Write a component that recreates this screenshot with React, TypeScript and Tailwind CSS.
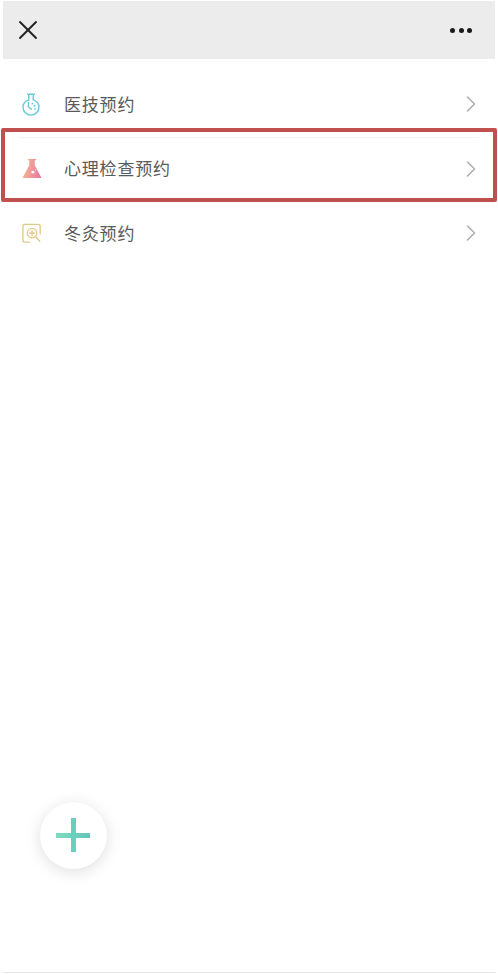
import React from 'react';
import { X, ChevronRight } from 'lucide-react';

const FlaskBlue = () => (
  <svg width="18" height="23" viewBox="0 0 20 26" fill="none" stroke="#6cc9d8" strokeWidth="1.6">
    <path d="M5.500 1.500h9M7.500 1.500v6.200C3.600 9 1 12 1 16a9 9 0 0 0 18 0c0-4-2.600-7-6.500-8.300V1.500" />
    <path d="M7 11v4.500l3.500 3" strokeLinecap="round" />
    <circle cx="11.500" cy="12" r="1" fill="#6cc9d8" stroke="none" />
    <circle cx="14" cy="14.500" r="1.100" fill="#6cc9d8" stroke="none" />
    <circle cx="14.500" cy="18" r="1" fill="#6cc9d8" stroke="none" />
  </svg>
);

const FlaskPink = () => (
  <svg width="20" height="21" viewBox="0 0 22 22">
    <defs>
      <linearGradient id="flask" x1="0" y1="0.200" x2="1" y2="0.400">
        <stop offset="0" stopColor="#f6bd8f" />
        <stop offset="1" stopColor="#e97aa2" />
      </linearGradient>
    </defs>
    <path d="M6.500 0.500h9v1.500h-1.500v5.500L21.500 21.500H0.500L8 7.500V2H6.500z" fill="url(#flask)" />
    <circle cx="12" cy="15" r="1.600" fill="#fff" />
    <circle cx="15" cy="12.500" r="0.600" fill="#fff" />
  </svg>
);

const SearchBox = () => (
  <svg width="20" height="21" viewBox="0 0 22 22" fill="none" stroke="#e3c987" strokeWidth="1.500">
    <path d="M9 20.500H3a2 2 0 0 1-2-2V3a2 2 0 0 1 2-2h15a2 2 0 0 1 2 2v9" />
    <circle cx="11" cy="10.500" r="5.200" />
    <path d="M11 8v5M8.500 10.500h5M15 14.500l4.500 5" strokeLinecap="round" />
  </svg>
);

const items = [
  { label: '医技预约', icon: <FlaskBlue /> },
  { label: '心理检查预约', icon: <FlaskPink />, highlight: true },
  { label: '冬灸预约', icon: <SearchBox /> },
];

export default function App() {
  return (
    <div
      className="relative h-[974px] w-[498px] overflow-hidden bg-white"
      style={{ fontFamily: '"Noto Sans CJK SC", "Noto Sans", sans-serif' }}
    >
      {/* Title bar */}
      <div className="mx-[3px] mt-px flex h-[58px] items-center justify-between bg-[#ececec] pl-[9px] pr-[23px]">
        <X size={32} strokeWidth={1.4} className="text-[#222]" />
        <div className="flex gap-[3.500px]">
          <span className="h-[5px] w-[5px] rounded-full bg-[#1a1a1a]" />
          <span className="h-[5px] w-[5px] rounded-full bg-[#1a1a1a]" />
          <span className="h-[5px] w-[5px] rounded-full bg-[#1a1a1a]" />
        </div>
      </div>

      {/* Menu */}
      <div className="mt-[13px]">
        {items.map((item) => (
          <div key={item.label} className="relative flex h-[64.500px] items-center pl-[22px] pr-[13px]">
            <div className="flex w-[42px] shrink-0 items-center">{item.icon}</div>
            <span className="mb-[2px] flex-1 text-[17px] tracking-[0.8px] text-[#5a5a5a]">{item.label}</span>
            <ChevronRight size={28} strokeWidth={1.3} className="text-[#adadad]" />
            {item.highlight && (
              <>
                <div className="absolute left-[19px] right-[19px] top-0 h-px bg-[#f4f4f4]" />
                <div className="absolute -top-[9px] bottom-[-1px] left-px right-px rounded-[2px] border-4 border-[#c0504d]" />
              </>
            )}
          </div>
        ))}
      </div>

      {/* Add button */}
      <div className="absolute left-[39.500px] top-[801.500px] flex h-[67px] w-[67px] items-center justify-center rounded-full bg-white shadow-[0_3px_16px_rgba(0,0,0,0.13)]">
        <div className="relative h-[34px] w-[34px]">
          <div className="absolute left-0 top-[14.500px] h-[5px] w-[34px] bg-gradient-to-r from-[#7fdcc0] to-[#62c4bb]" />
          <div className="absolute left-[14.500px] top-0 h-[34px] w-[5px] bg-[#6bcfbd]" />
        </div>
      </div>

      {/* Bottom edge */}
      <div className="absolute bottom-px left-[3px] right-[3px] h-px bg-[#e6e6e6]" />
    </div>
  );
}
